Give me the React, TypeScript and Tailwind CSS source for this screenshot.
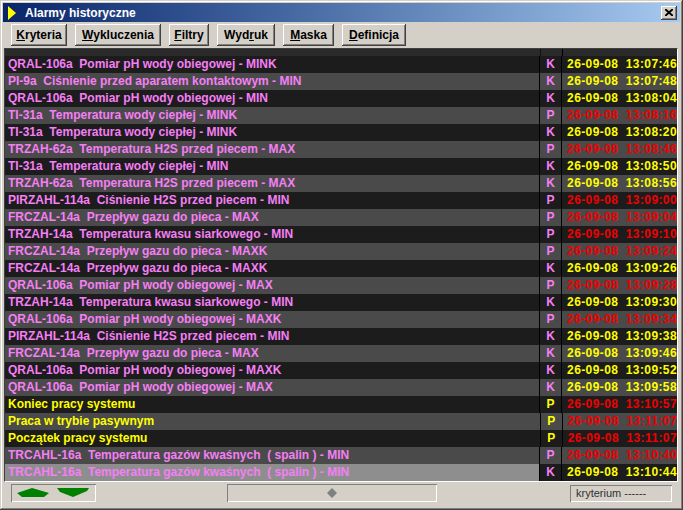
import React from "react";

type Row = { d: string; t: "K" | "P"; time: string; sys?: boolean };

const rows: Row[] = [
  { d: "QRAL-106a  Pomiar pH wody obiegowej - MINK", t: "K", time: "13:07:46" },
  { d: "PI-9a  Ciśnienie przed aparatem kontaktowym - MIN", t: "K", time: "13:07:48" },
  { d: "QRAL-106a  Pomiar pH wody obiegowej - MIN", t: "K", time: "13:08:04" },
  { d: "TI-31a  Temperatura wody ciepłej - MINK", t: "P", time: "13:08:16" },
  { d: "TI-31a  Temperatura wody ciepłej - MINK", t: "K", time: "13:08:20" },
  { d: "TRZAH-62a  Temperatura H2S przed piecem - MAX", t: "P", time: "13:08:46" },
  { d: "TI-31a  Temperatura wody ciepłej - MIN", t: "K", time: "13:08:50" },
  { d: "TRZAH-62a  Temperatura H2S przed piecem - MAX", t: "K", time: "13:08:56" },
  { d: "PIRZAHL-114a  Ciśnienie H2S przed piecem - MIN", t: "P", time: "13:09:00" },
  { d: "FRCZAL-14a  Przepływ gazu do pieca - MAX", t: "P", time: "13:09:04" },
  { d: "TRZAH-14a  Temperatura kwasu siarkowego - MIN", t: "P", time: "13:09:10" },
  { d: "FRCZAL-14a  Przepływ gazu do pieca - MAXK", t: "P", time: "13:09:24" },
  { d: "FRCZAL-14a  Przepływ gazu do pieca - MAXK", t: "K", time: "13:09:26" },
  { d: "QRAL-106a  Pomiar pH wody obiegowej - MAX", t: "P", time: "13:09:28" },
  { d: "TRZAH-14a  Temperatura kwasu siarkowego - MIN", t: "K", time: "13:09:30" },
  { d: "QRAL-106a  Pomiar pH wody obiegowej - MAXK", t: "P", time: "13:09:34" },
  { d: "PIRZAHL-114a  Ciśnienie H2S przed piecem - MIN", t: "K", time: "13:09:38" },
  { d: "FRCZAL-14a  Przepływ gazu do pieca - MAX", t: "K", time: "13:09:46" },
  { d: "QRAL-106a  Pomiar pH wody obiegowej - MAXK", t: "K", time: "13:09:52" },
  { d: "QRAL-106a  Pomiar pH wody obiegowej - MAX", t: "K", time: "13:09:58" },
  { d: "Koniec pracy systemu", t: "P", time: "13:10:57", sys: true },
  { d: "Praca w trybie pasywnym", t: "P", time: "13:11:07", sys: true },
  { d: "Początek pracy systemu", t: "P", time: "13:11:07", sys: true },
  { d: "TRCAHL-16a  Temperatura gazów kwaśnych  ( spalin ) - MIN", t: "P", time: "13:10:40" },
  { d: "TRCAHL-16a  Temperatura gazów kwaśnych  ( spalin ) - MIN", t: "K", time: "13:10:44" },
];

const Btn = ({ w, u, rest, pre = "" }: { w: string; u: string; rest: string; pre?: string }) => (
  <div
    className={`${w} h-[22px] flex items-center justify-center bg-[#d4d0c8] text-black text-[12px] font-bold shadow-[inset_-1px_-1px_#404040,inset_1px_1px_#ffffff,inset_-2px_-2px_#808080,inset_2px_2px_#d4d0c8]`}
  >
    <span>
      {pre}
      <span className="underline">{u}</span>
      {rest}
    </span>
  </div>
);

export default function App() {
  return (
    <div
      className="w-[683px] h-[510px] bg-[#d4d0c8] p-[3px] flex flex-col shadow-[inset_-1px_-1px_#404040,inset_1px_1px_#d4d0c8,inset_-2px_-2px_#808080,inset_2px_2px_#ffffff] overflow-hidden"
      style={{ fontFamily: '"Liberation Sans", Arial, sans-serif' }}
    >
      {/* Title bar */}
      <div className="h-[19px] flex items-center bg-gradient-to-r from-[#0a246a] to-[#a6caf0] pl-[5px] pr-[3px]">
        <svg width="8" height="14" viewBox="0 0 8 14" className="mr-[9px]">
          <polygon points="0,0 8,7 0,14" fill="#ffff00" />
        </svg>
        <span className="text-white font-bold text-[12px] leading-none">Alarmy historyczne</span>
        <div className="ml-auto w-[16px] h-[14px] bg-[#d4d0c8] flex items-center justify-center shadow-[inset_-1px_-1px_#404040,inset_1px_1px_#ffffff,inset_-2px_-2px_#808080]">
          <svg width="8" height="7" viewBox="0 0 8 7">
            <path d="M0 0 L8 7 M8 0 L0 7" stroke="#000" strokeWidth="2" />
          </svg>
        </div>
      </div>

      {/* Toolbar */}
      <div className="h-[26px] flex items-start pt-[2px] pl-[8px] gap-[8px]">
        <Btn w="w-[56px]" u="K" rest="ryteria" />
        <Btn w="w-[86px]" u="W" rest="ykluczenia" />
        <Btn w="w-[40px]" u="F" rest="iltry" />
        <Btn w="w-[58px]" pre="Wyd" u="r" rest="uk" />
        <Btn w="w-[51px]" u="M" rest="aska" />
        <Btn w="w-[64px]" u="D" rest="efinicja" />
      </div>

      {/* List */}
      <div className="ml-[1px] mr-[2px] border-t border-l border-[#404040] border-r border-b border-r-[#ffffff] border-b-[#ffffff] flex flex-col">
        <div className="h-[7px] flex bg-[#2a2a2a]">
          <div className="w-[535px]" />
          <div className="w-[1px] bg-[#111]" />
          <div className="w-[21px]" />
          <div className="w-[1px] bg-[#000]" />
          <div className="flex-1" />
        </div>
        {rows.map((r, i) => {
          const light = i % 2 === 1;
          const last = i === rows.length - 1;
          const bg = light ? "bg-[#4a4a4a]" : "bg-[#1c1c1c]";
          const descBg = last ? "bg-[#8e8e8e]" : bg;
          const txt = r.sys ? "text-[#ffff00]" : "text-[#f57ff5]";
          const timeCol = r.t === "K" ? "text-[#ffff00]" : "text-[#f00000]";
          const colBg = last ? "bg-[#1c1c1c]" : bg;
          return (
            <div key={i} className="h-[17px] flex text-[12px] font-bold leading-[17px]">
              <div className={`w-[535px] ${descBg} ${txt} pl-[3px] whitespace-pre overflow-hidden`}>{r.d}</div>
              <div className="w-[1px] bg-[#000]" />
              <div className={`w-[21px] ${colBg} ${txt} text-center`}>{r.t}</div>
              <div className="w-[1px] bg-[#000]" />
              <div className={`flex-1 ${colBg} ${timeCol} pl-[5px] whitespace-pre tracking-[0.4px]`}>{"26-09-08  " + r.time}</div>
            </div>
          );
        })}
      </div>

      {/* Bottom bar */}
      <div className="flex items-start pt-[2px] pl-[8px]">
        <div className="w-[85px] h-[18px] flex items-center pl-[6px] gap-[7px] shadow-[inset_1px_1px_#808080,inset_-1px_-1px_#ffffff]">
          <svg width="33" height="10" viewBox="0 0 33 10">
            <polygon points="0,5 15,0 32,5 27,9 5,9" fill="#008000" />
          </svg>
          <svg width="33" height="10" viewBox="0 0 33 10">
            <polygon points="0,0 32,0 30,3 16,9 3,4" fill="#008000" />
          </svg>
        </div>
        <div className="ml-[131px] w-[210px] h-[18px] flex items-center justify-center shadow-[inset_1px_1px_#808080,inset_-1px_-1px_#ffffff]">
          <svg width="10" height="10" viewBox="0 0 10 10">
            <polygon points="5,0 10,5 5,10 0,5" fill="#808080" />
          </svg>
        </div>
        <div className="ml-[133px] mt-[1px] w-[102px] h-[17px] flex items-center pl-[6px] text-[11px] text-[#303030] shadow-[inset_1px_1px_#808080,inset_-1px_-1px_#ffffff]">
          kryterium ------
        </div>
      </div>
    </div>
  );
}
